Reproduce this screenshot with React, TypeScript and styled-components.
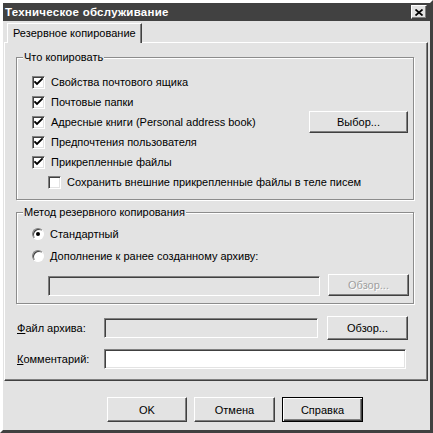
import styled, { createGlobalStyle, css } from "styled-components";
import { FC, ReactNode } from "react";

const BG = "#e3e3e3";

const Global = createGlobalStyle`
  html, body { margin: 0; padding: 0; background: ${BG}; }
  body { font-family: "Liberation Sans", Arial, sans-serif; font-size: 11px; color: #000; }
`;

const raised = css`
  border: 1px solid;
  border-color: #fff #404040 #404040 #fff;
  box-shadow: inset -1px -1px 0 #808080;
`;

const sunken = css`
  border: 1px solid;
  border-color: #808080 #fff #fff #808080;
  box-shadow: inset 1px 1px 0 #404040, inset -1px -1px 0 ${BG};
`;

const Window = styled.div`
  width: 433px;
  height: 433px;
  box-sizing: border-box;
  background: ${BG};
  border: 3px solid;
  border-color: #fff #404040 #404040 #fff;
  display: flex;
  flex-direction: column;
`;

const TitleBar = styled.div`
  height: 18px;
  background: #414141;
  display: flex;
  align-items: center;
  justify-content: space-between;
  padding: 0 3px 0 2px;
`;

const Title = styled.span`
  color: #fff;
  font-weight: bold;
  font-size: 11.5px;
  letter-spacing: 0.25px;
`;

const CloseBtn = styled.div`
  width: 16px;
  height: 14px;
  box-sizing: border-box;
  background: ${BG};
  ${raised};
  display: flex;
  align-items: center;
  justify-content: center;
`;

const Content = styled.div`
  flex: 1;
  display: flex;
  flex-direction: column;
  padding: 1px 2px 0 1px;
`;

const TabStrip = styled.div`
  display: flex;
  height: 20px;
  align-items: flex-end;
  padding-left: 3px;
`;

const Tab = styled.div`
  height: 20px;
  box-sizing: border-box;
  padding: 3px 5px 0 5px;
  border: 1px solid;
  border-color: #fff #404040 transparent #fff;
  border-bottom: none;
  box-shadow: inset -1px 0 0 #808080;
  margin-bottom: -1px;
  background: ${BG};
  position: relative;
  z-index: 1;
`;

const TabPanel = styled.div`
  height: 339px;
  box-sizing: border-box;
  border: 1px solid;
  border-color: #fff #404040 #404040 #fff;
  box-shadow: inset -1px -1px 0 #808080;
  padding: 8px 13px 0 11px;
  display: flex;
  flex-direction: column;
`;

const Group = styled.fieldset<{ h: number; mt?: number; pt: number }>`
  margin: ${(p) => p.mt ?? 0}px 0 0 0;
  height: ${(p) => p.h}px;
  box-sizing: border-box;
  border: 1px solid #8c8c8c;
  box-shadow: inset 1px 1px 0 #fff, 1px 1px 0 #fff;
  padding: ${(p) => p.pt}px 5px 0 15px;
  display: flex;
  flex-direction: column;
  min-width: 0;
`;

const Legend = styled.legend`
  padding: 0 1px;
  margin-left: -9px;
  background: ${BG};
  line-height: 13px;
`;

const Row = styled.div<{ indent?: number; h?: number }>`
  height: ${(p) => p.h ?? 20}px;
  display: flex;
  align-items: center;
  padding-left: ${(p) => p.indent ?? 0}px;
  gap: 6px;
`;

const FieldPair = styled.div`
  height: 22px;
  margin-top: 7px;
  display: flex;
  align-items: flex-end;
  padding-left: 16px;
  gap: 8px;
`;

const RowText = styled.span<{ grow?: boolean }>`
  flex: ${(p) => (p.grow ? 1 : "none")};
  white-space: nowrap;
`;

const Box = styled.div`
  width: 13px;
  height: 13px;
  box-sizing: border-box;
  background: #fff;
  ${sunken};
  display: flex;
  align-items: center;
  justify-content: center;
  flex: none;
`;

const Radio = styled.div`
  width: 12px;
  height: 12px;
  box-sizing: border-box;
  border-radius: 50%;
  background: #fff;
  border: 1px solid;
  border-color: #808080 #fff #fff #808080;
  box-shadow: inset 1px 1px 0 #404040;
  display: flex;
  align-items: center;
  justify-content: center;
  flex: none;
`;

const Dot = styled.div`
  width: 4px;
  height: 4px;
  border-radius: 50%;
  background: #000;
`;

const Button = styled.div<{ w: number; h?: number; disabled?: boolean; isDefault?: boolean }>`
  width: ${(p) => p.w}px;
  height: ${(p) => p.h ?? 22}px;
  box-sizing: border-box;
  flex: none;
  display: flex;
  align-items: center;
  justify-content: center;
  background: ${BG};
  color: ${(p) => (p.disabled ? "#a0a0a0" : "#000")};
  ${(p) => p.disabled && "text-shadow: 1px 1px 0 #fff;"}
  ${(p) =>
    p.isDefault
      ? css`
          border: 1px solid #000;
          box-shadow: inset 1px 1px 0 #fff, inset -1px -1px 0 #404040, inset -2px -2px 0 #808080;
        `
      : raised}
`;

const Field = styled.div<{ w: number; h?: number; disabled?: boolean }>`
  width: ${(p) => p.w}px;
  height: ${(p) => p.h ?? 20}px;
  box-sizing: border-box;
  flex: none;
  background: ${(p) => (p.disabled ? BG : "#fff")};
  ${sunken};
`;

const FieldRow = styled.div<{ mt: number; h: number }>`
  margin-top: ${(p) => p.mt}px;
  height: ${(p) => p.h}px;
  display: flex;
  align-items: center;
  padding-left: 1px;
`;

const FieldLabel = styled.span`
  width: 87px;
  flex: none;
  white-space: nowrap;
`;

const Spacer = styled.div<{ w: number }>`
  width: ${(p) => p.w}px;
  flex: none;
`;

const ButtonBar = styled.div`
  display: flex;
  gap: 7px;
  padding: 16px 0 0 103px;
`;

const Check: FC = () => (
  <svg width="9" height="9" viewBox="0 0 9 9">
    <path d="M1 4 L3 6 L8 1" stroke="#000" strokeWidth="1.8" fill="none" strokeLinecap="square" />
  </svg>
);

const CheckItem: FC<{ checked?: boolean; indent?: number; children: ReactNode; extra?: ReactNode }> = ({
  checked,
  indent,
  children,
  extra,
}) => (
  <Row indent={indent}>
    <Box>{checked && <Check />}</Box>
    <RowText grow={!!extra}>{children}</RowText>
    {extra}
  </Row>
);

export default function App() {
  return (
    <>
      <Global />
      <Window>
        <TitleBar>
          <Title>Техническое обслуживание</Title>
          <CloseBtn>
            <svg width="8" height="7" viewBox="0 0 8 7">
              <path d="M0.5 0.5 L7.5 6.5 M7.5 0.5 L0.5 6.5" stroke="#000" strokeWidth="1.7" />
            </svg>
          </CloseBtn>
        </TitleBar>
        <Content>
          <TabStrip>
            <Tab>Резервное копирование</Tab>
          </TabStrip>
          <TabPanel>
            <Group h={149} pt={8}>
              <Legend>Что копировать</Legend>
              <CheckItem checked>Свойства почтового ящика</CheckItem>
              <CheckItem checked>Почтовые папки</CheckItem>
              <CheckItem checked extra={<Button w={99}>Выбор...</Button>}>
                Адресные книги (Personal address book)
              </CheckItem>
              <CheckItem checked>Предпочтения пользователя</CheckItem>
              <CheckItem checked>Прикрепленные файлы</CheckItem>
              <CheckItem indent={16}>Сохранить внешние прикрепленные файлы в теле писем</CheckItem>
            </Group>
            <Group h={98} mt={6} pt={4}>
              <Legend>Метод резервного копирования</Legend>
              <Row h={22}>
                <Radio>
                  <Dot />
                </Radio>
                <RowText>Стандартный</RowText>
              </Row>
              <Row h={22}>
                <Radio />
                <RowText>Дополнение к ранее созданному архиву:</RowText>
              </Row>
              <FieldPair>
                <Field w={272} disabled />
                <Button w={81} disabled>
                  Обзор...
                </Button>
              </FieldPair>
            </Group>
            <FieldRow mt={12} h={24}>
              <FieldLabel>
                <u>Ф</u>айл архива:
              </FieldLabel>
              <Field w={214} disabled />
              <Spacer w={9} />
              <Button w={81} h={24}>
                Обзор...
              </Button>
            </FieldRow>
            <FieldRow mt={8} h={22}>
              <FieldLabel>
                <u>К</u>омментарий:
              </FieldLabel>
              <Field w={302} />
            </FieldRow>
          </TabPanel>
          <ButtonBar>
            <Button w={80} h={25}>
              OK
            </Button>
            <Button w={81} h={25}>
              Отмена
            </Button>
            <Button w={81} h={25} isDefault>
              Справка
            </Button>
          </ButtonBar>
        </Content>
      </Window>
    </>
  );
}
